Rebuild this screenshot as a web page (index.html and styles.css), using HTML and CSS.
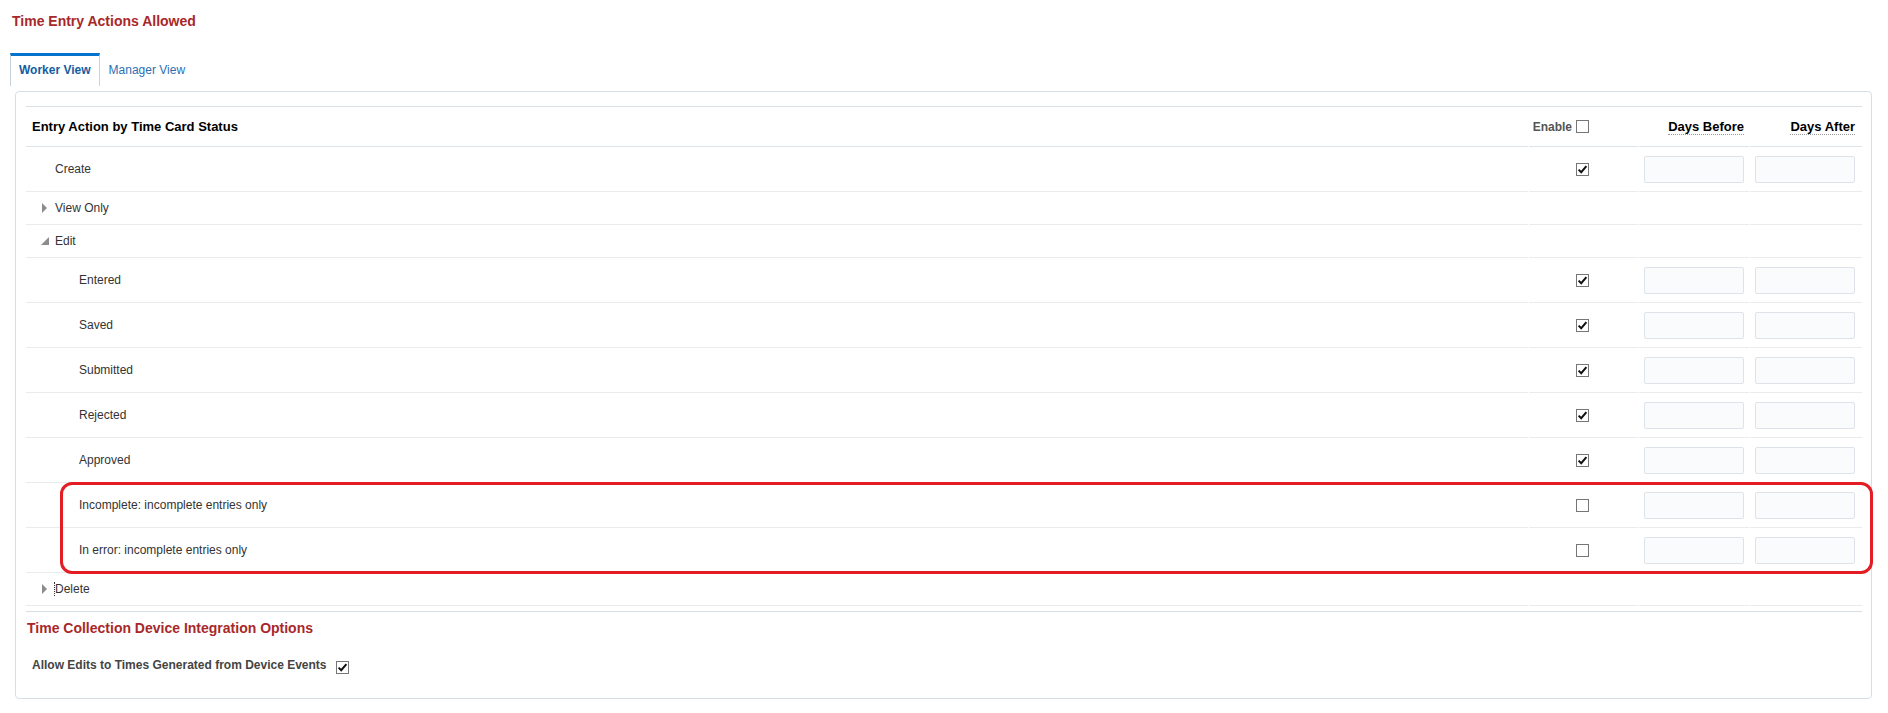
FILE: index.html
```html
<!DOCTYPE html>
<html lang="en">
<head>
  <meta charset="UTF-8" />
  <title>Time Entry Actions Allowed</title>
  <link rel="stylesheet" href="styles.css">
</head>
<body>
  <div class="page">
    <h2 class="section-title">Time Entry Actions Allowed</h2>

    <div class="tabs">
      <div class="tab active">Worker View</div>
      <div class="tab">Manager View</div>
    </div>

    <div class="panel">
      <div class="status-table">
        <!-- Header -->
        <div class="row header-row">
          <div class="cell name-cell">Entry Action by Time Card Status</div>
          <div class="cell enable-cell">Enable <span class="checkbox"></span></div>
          <div class="cell days-cell"><span class="hint">Days Before</span></div>
          <div class="cell days-cell"><span class="hint">Days After</span></div>
        </div>

        <div class="row tall">
          <div class="cell name-cell level-1">Create</div>
          <div class="cell enable-cell"><span class="checkbox checked"><svg viewBox="0 0 11 11" width="11" height="11"><path d="M1.6 5.6 L4.2 8.2 L9.4 2.2" fill="none" stroke="#111" stroke-width="2"/></svg></span></div>
          <div class="cell days-cell"><input class="days-input" type="text"></div>
          <div class="cell days-cell"><input class="days-input" type="text"></div>
        </div>

        <div class="row short">
          <div class="cell name-cell expandable"><span class="disclosure"><svg width="5" height="10" viewBox="0 0 5 10"><polygon points="0,0 5,5 0,10" fill="#8c8c8c"/></svg></span>View Only</div>
          <div class="cell enable-cell"></div>
          <div class="cell days-cell"></div>
          <div class="cell days-cell"></div>
        </div>

        <div class="row short">
          <div class="cell name-cell expandable open"><span class="disclosure"><svg width="8" height="8" viewBox="0 0 8 8"><polygon points="8,0 8,8 0,8" fill="#8c8c8c"/></svg></span>Edit</div>
          <div class="cell enable-cell"></div>
          <div class="cell days-cell"></div>
          <div class="cell days-cell"></div>
        </div>

        <div class="row tall">
          <div class="cell name-cell level-2">Entered</div>
          <div class="cell enable-cell"><span class="checkbox checked"><svg viewBox="0 0 11 11" width="11" height="11"><path d="M1.6 5.6 L4.2 8.2 L9.4 2.2" fill="none" stroke="#111" stroke-width="2"/></svg></span></div>
          <div class="cell days-cell"><input class="days-input" type="text"></div>
          <div class="cell days-cell"><input class="days-input" type="text"></div>
        </div>

        <div class="row tall">
          <div class="cell name-cell level-2">Saved</div>
          <div class="cell enable-cell"><span class="checkbox checked"><svg viewBox="0 0 11 11" width="11" height="11"><path d="M1.6 5.6 L4.2 8.2 L9.4 2.2" fill="none" stroke="#111" stroke-width="2"/></svg></span></div>
          <div class="cell days-cell"><input class="days-input" type="text"></div>
          <div class="cell days-cell"><input class="days-input" type="text"></div>
        </div>

        <div class="row tall">
          <div class="cell name-cell level-2">Submitted</div>
          <div class="cell enable-cell"><span class="checkbox checked"><svg viewBox="0 0 11 11" width="11" height="11"><path d="M1.6 5.6 L4.2 8.2 L9.4 2.2" fill="none" stroke="#111" stroke-width="2"/></svg></span></div>
          <div class="cell days-cell"><input class="days-input" type="text"></div>
          <div class="cell days-cell"><input class="days-input" type="text"></div>
        </div>

        <div class="row tall">
          <div class="cell name-cell level-2">Rejected</div>
          <div class="cell enable-cell"><span class="checkbox checked"><svg viewBox="0 0 11 11" width="11" height="11"><path d="M1.6 5.6 L4.2 8.2 L9.4 2.2" fill="none" stroke="#111" stroke-width="2"/></svg></span></div>
          <div class="cell days-cell"><input class="days-input" type="text"></div>
          <div class="cell days-cell"><input class="days-input" type="text"></div>
        </div>

        <div class="row tall">
          <div class="cell name-cell level-2">Approved</div>
          <div class="cell enable-cell"><span class="checkbox checked"><svg viewBox="0 0 11 11" width="11" height="11"><path d="M1.6 5.6 L4.2 8.2 L9.4 2.2" fill="none" stroke="#111" stroke-width="2"/></svg></span></div>
          <div class="cell days-cell"><input class="days-input" type="text"></div>
          <div class="cell days-cell"><input class="days-input" type="text"></div>
        </div>

        <!-- Highlighted rows -->
        <div class="highlight-group">
          <div class="row tall">
            <div class="cell name-cell level-2">Incomplete: incomplete entries only</div>
            <div class="cell enable-cell"><span class="checkbox"></span></div>
            <div class="cell days-cell"><input class="days-input" type="text"></div>
            <div class="cell days-cell"><input class="days-input" type="text"></div>
          </div>
          <div class="row tall">
            <div class="cell name-cell level-2">In error: incomplete entries only</div>
            <div class="cell enable-cell"><span class="checkbox"></span></div>
            <div class="cell days-cell"><input class="days-input" type="text"></div>
            <div class="cell days-cell"><input class="days-input" type="text"></div>
          </div>
          <div class="highlight"></div>
        </div>

        <div class="row short">
          <div class="cell name-cell expandable"><span class="disclosure"><svg width="5" height="10" viewBox="0 0 5 10"><polygon points="0,0 5,5 0,10" fill="#8c8c8c"/></svg></span><span class="focused">Delete</span></div>
          <div class="cell enable-cell"></div>
          <div class="cell days-cell"></div>
          <div class="cell days-cell"></div>
        </div>
      </div>

      <div class="device-options">
        <h2 class="section-title">Time Collection Device Integration Options</h2>
        <div class="option-line">
          <span class="option-label">Allow Edits to Times Generated from Device Events</span>
          <span class="checkbox checked"><svg viewBox="0 0 11 11" width="11" height="11"><path d="M1.6 5.6 L4.2 8.2 L9.4 2.2" fill="none" stroke="#111" stroke-width="2"/></svg></span>
        </div>
      </div>
    </div>
  </div>
</body>
</html>
```

FILE: styles.css
```css
body {
  margin: 0;
  font-family: "Liberation Sans", Arial, sans-serif;
  font-size: 12px;
  color: #333;
  background: #fff;
}
.page {
  padding: 13px 0 0 10px;
}
.section-title {
  margin: 0 0 0 2px;
  font-size: 14px;
  line-height: 16px;
  font-weight: bold;
  color: #a8282a;
}

/* Tabs */
.tabs {
  display: flex;
  margin-top: 24px;
}
.tab {
  height: 28px;
  padding: 0 8px 2px;
  line-height: 28px;
  border-top: 3px solid transparent;
  border-left: 1px solid transparent;
  border-right: 1px solid transparent;
  color: #2d6fb3;
}
.tab.active {
  border-top-color: #0572ce;
  border-left-color: #c9d3dc;
  border-right-color: #c9d3dc;
  color: #145d9f;
  font-weight: bold;
}

/* Panel */
.panel {
  margin: 5px 16px 0 5px;
  padding: 14px 9px 24px 10px;
  border: 1px solid #d6dfe6;
  border-radius: 4px;
}
.status-table {
  border-top: 1px solid #d9e1e8;
}
.row {
  display: grid;
  grid-template-columns: 1fr 109px 110px 112px;
  column-gap: 1px;
}
.row.tall { height: 45px; }
.row.short { height: 33px; }
.row.header-row { height: 40px; }
.cell {
  display: flex;
  align-items: center;
  box-sizing: border-box;
  border-bottom: 1px solid #e8ecef;
}
.header-row .cell {
  border-bottom-color: #dde4ea;
  font-weight: bold;
  color: #000;
  font-size: 13px;
}
.name-cell {
  padding-left: 6px;
}
.name-cell.level-1 { padding-left: 29px; }
.name-cell.level-2 { padding-left: 53px; }
.name-cell.expandable { padding-left: 13px; }
.disclosure {
  display: inline-flex;
  align-items: center;
  justify-content: center;
  width: 12px;
  margin-right: 4px;
}
.expandable:not(.open) .disclosure { justify-content: flex-end; width: 8px; margin-right: 8px; }
.focused {
  border-left: 1px dotted #333;
  margin-left: -1px;
}
.enable-cell {
  justify-content: flex-end;
  padding-right: 49px;
}
.header-row .enable-cell {
  font-size: 12px;
  color: #555;
}
.header-row .enable-cell .checkbox {
  margin-left: 4px;
}
.days-cell {
  justify-content: flex-end;
  padding-right: 5px;
}
.days-cell:last-child {
  padding-right: 7px;
}
.hint {
  border-bottom: 1px dotted #9a9a9a;
  line-height: 15px;
}
.checkbox {
  display: inline-flex;
  align-items: center;
  justify-content: center;
  box-sizing: border-box;
  width: 13px;
  height: 13px;
  border: 1px solid #767676;
  background: #fff;
}
.days-input {
  box-sizing: border-box;
  width: 100px;
  height: 27px;
  margin: 0;
  padding: 0 4px;
  border: 1px solid #dde3e8;
  border-radius: 2px;
  background: #fafbfd;
}

/* Red annotation around the incomplete / in error rows */
.highlight-group {
  position: relative;
}
.highlight {
  position: absolute;
  top: -1px;
  bottom: -1px;
  left: 34px;
  right: -11px;
  border: 3px solid #e41d25;
  border-radius: 12px;
  pointer-events: none;
}

/* Device options */
.device-options {
  margin-top: 5px;
  border-top: 1px solid #d6dfe6;
  padding-top: 8px;
}
.device-options .section-title {
  margin-left: 1px;
}
.option-line {
  display: flex;
  align-items: flex-start;
  margin: 22px 0 0 6px;
}
.option-label {
  font-weight: bold;
  line-height: 14px;
  color: #444;
  margin-right: 9px;
}
.option-line .checkbox {
  margin-top: 3px;
}
```
